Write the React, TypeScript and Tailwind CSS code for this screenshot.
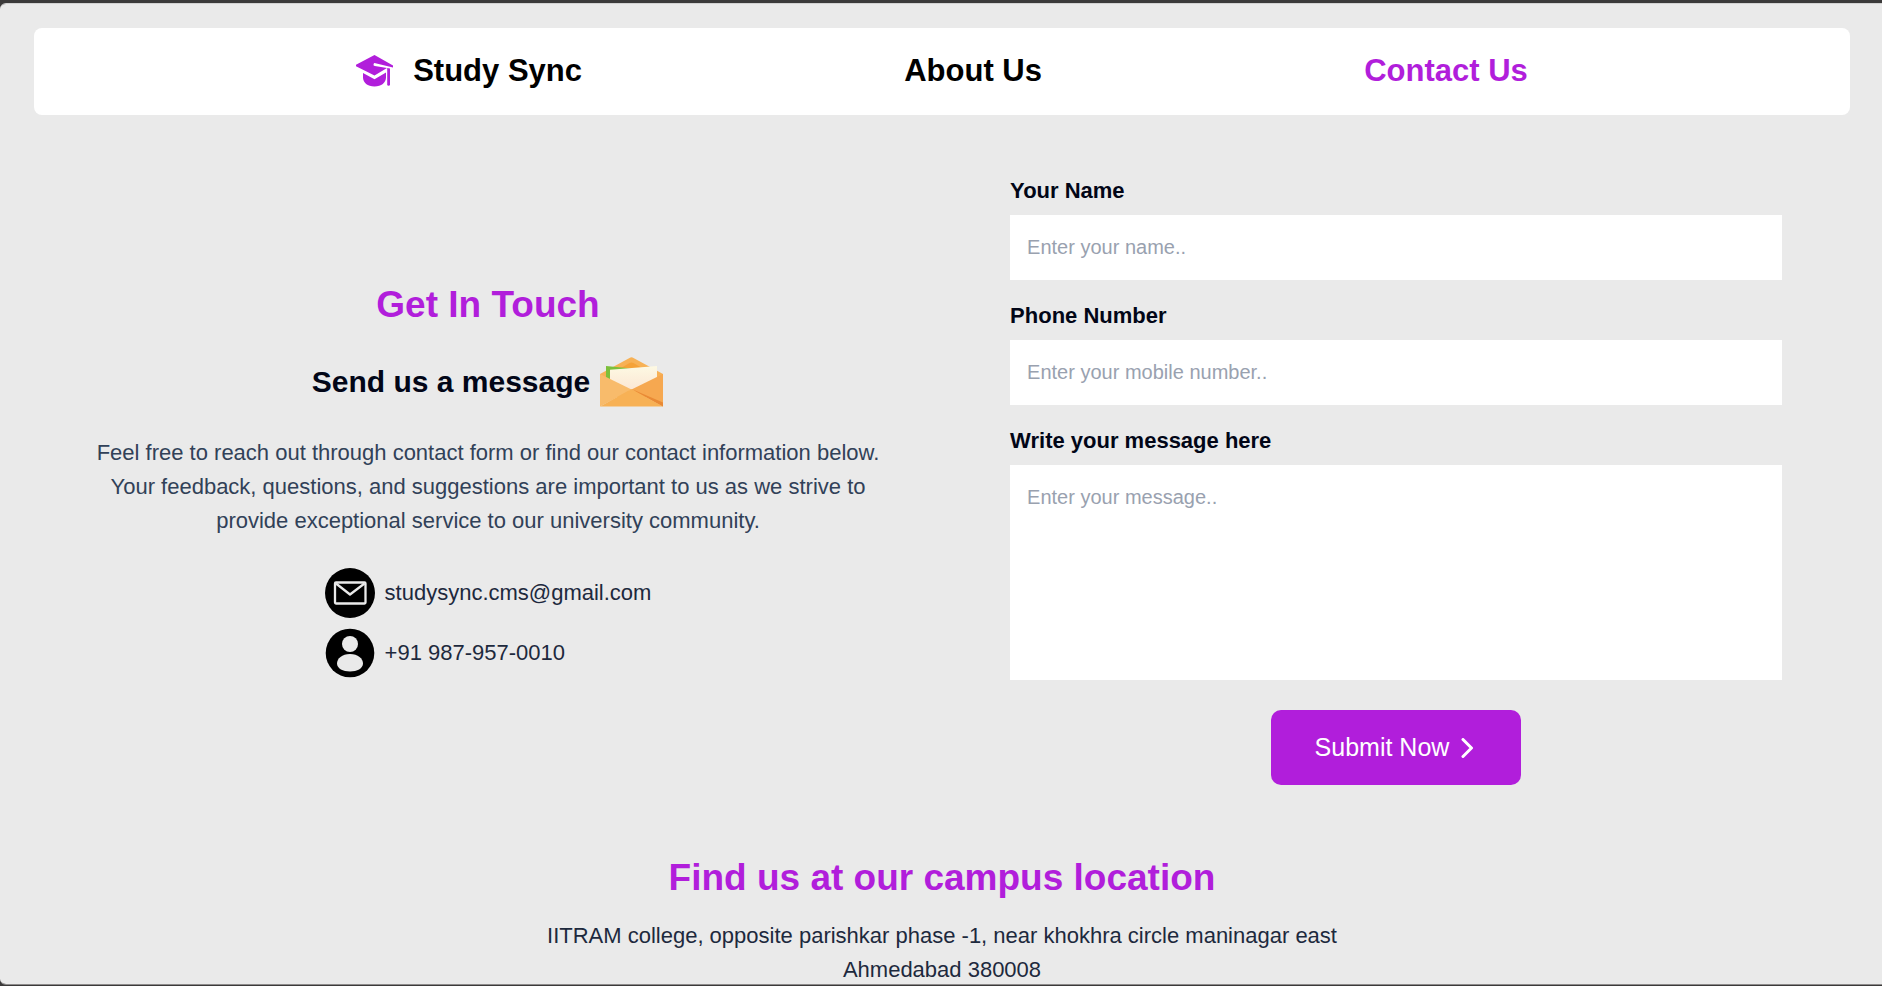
import React from "react";

const NAV_LINK = "text-[31px] leading-10 font-bold";
const LABEL = "block text-[22px] leading-[34px] font-bold text-[#020617]";
const FIELD =
  "block w-full bg-white px-[17px] text-[20px] leading-[30px] text-slate-900 placeholder:text-gray-400 outline-none";

function CapIcon() {
  return (
    <svg viewBox="0 0 38 32" className="h-8 w-[38px]" fill="#b11edb" aria-hidden="true">
      <path d="M18.500 0 37 10.600V12.400L19.500 8.200A1.500 1.500 0 1 0 18.800 11.100L31 13 18.500 20.400 0 11.200V9.800z" />
      <path d="M7 18 18.500 24.200 30 17.600V22.500c0 5-4.600 9-11.500 9S7 27.500 7 22.500z" />
      <path d="M31.200 13 34 13.400V29.400a1.400 1.400 0 0 1-2.800 0z" />
    </svg>
  );
}

function EnvelopeIcon() {
  return (
    <svg viewBox="0 0 64 50" className="h-[50px] w-16" aria-hidden="true">
      <defs>
        <linearGradient id="sheet" x1="0" y1="0" x2="0" y2="1">
          <stop offset="0" stopColor="#fdf9e3" />
          <stop offset="1" stopColor="#fbe4d2" />
        </linearGradient>
      </defs>
      <path d="M0 17 29.500 1Q31.500 -.4 33.500 1L63 17V40H0z" fill="#f7b155" />
      <path d="M16 14 29.500 6Q31.500 5 33.500 6L47 14z" fill="#f5a238" />
      <path d="M6 9 32 11.500 14 26 6 21z" fill="#7cbf3a" />
      <path d="M10 12.800 57 9V21L31.500 36 10 24z" fill="url(#sheet)" />
      <path d="M0 17 31.500 32.500 0 49.500z" fill="#f8bb6b" />
      <path d="M63 17 31.500 32.500 63 49.500z" fill="#f6a850" />
      <path d="M31.500 32 63 49.500H0z" fill="#f7b155" />
      <path d="M31.500 32 63 45.500V49.500z" fill="#e98a35" />
    </svg>
  );
}

function MailBadge() {
  return (
    <svg viewBox="0 0 50 50" className="size-[50px]" aria-hidden="true">
      <circle cx="25" cy="25" r="25" />
      <g fill="none" stroke="#eaeaea" strokeWidth="2.300" strokeLinejoin="round">
        <rect x="10" y="14.500" width="30.500" height="21" rx="1" />
        <path d="M11 15.500 25 26.500 39.500 15.500" />
      </g>
    </svg>
  );
}

function PersonBadge() {
  return (
    <svg viewBox="0 0 50 50" className="size-[50px]" aria-hidden="true">
      <circle cx="25" cy="25" r="24.300" />
      <g fill="#eaeaea">
        <circle cx="25" cy="16" r="8" />
        <path d="M25 26C33 26 38 30.500 38 35.500C38 40.500 32 43.500 25 43.500S12 40.500 12 35.500C12 30.500 17 26 25 26z" />
      </g>
    </svg>
  );
}

export default function App() {
  return (
    <div className="h-screen bg-[#3b3a3a] pt-[3px] pb-px font-['Liberation_Sans',Arial,sans-serif]">
      <div className="h-full overflow-y-auto rounded-l-md border-t border-b border-t-[#d2d2d2] border-b-[#8d8b8b] bg-[#eaeaea] pr-8 pl-[34px] [scrollbar-width:none]">
        <nav className="mt-6 flex h-[87px] items-center justify-evenly rounded-lg bg-white pb-[2px]">
          <a href="#home" className={`${NAV_LINK} flex items-center gap-[19px] text-black`}>
            <CapIcon />
            Study Sync
          </a>
          <a href="#about" className={`${NAV_LINK} text-black`}>
            About Us
          </a>
          <a href="#contact" className={`${NAV_LINK} text-[#b11edb]`}>
            Contact Us
          </a>
        </nav>

        <main>
          <div className="mt-[59px] grid grid-cols-2 items-center">
            <section className="flex flex-col items-center">
              <h1 className="text-[37px] leading-[45px] font-bold text-[#b11edb]">Get In Touch</h1>
              <div className="mt-[30px] flex items-center gap-[10px]">
                <h2 className="text-[30px] leading-[45px] font-bold text-[#020617]">Send us a message</h2>
                <EnvelopeIcon />
              </div>
              <p className="mt-[29px] w-[90%] text-center text-[22px] leading-[34px] text-slate-700">
                Feel free to reach out through contact form or find our contact information below. Your
                feedback, questions, and suggestions are important to us as we strive to provide
                exceptional service to our university community.
              </p>
              <ul className="mt-[30px] flex flex-col gap-[10px] text-[22px] leading-[34px] text-slate-800">
                <li className="flex items-center gap-[10px]">
                  <MailBadge />
                  studysync.cms@gmail.com
                </li>
                <li className="flex items-center gap-[10px]">
                  <PersonBadge />
                  +91 987-957-0010
                </li>
              </ul>
            </section>

            <form className="mx-auto w-[85%]" onSubmit={(e) => e.preventDefault()}>
              <label htmlFor="name" className={LABEL}>
                Your Name
              </label>
              <input id="name" type="text" placeholder="Enter your name.." className={`${FIELD} mt-[7px] h-[65px]`} />
              <label htmlFor="phone" className={`${LABEL} mt-[19px]`}>
                Phone Number
              </label>
              <input id="phone" type="tel" placeholder="Enter your mobile number.." className={`${FIELD} mt-[7px] h-[65px]`} />
              <label htmlFor="message" className={`${LABEL} mt-[19px]`}>
                Write your message here
              </label>
              <textarea
                id="message"
                placeholder="Enter your message.."
                className={`${FIELD} mt-[7px] h-[215px] resize-none py-[17px]`}
              />
              <button
                type="submit"
                className="mx-auto mt-[30px] flex h-[75px] w-[250px] items-center justify-center gap-2 rounded-[10px] bg-[#b11edb] text-[25px] text-white"
              >
                Submit Now
                <svg viewBox="0 0 20 20" className="size-5" fill="none" stroke="currentColor" strokeWidth="3" strokeLinecap="round" strokeLinejoin="round" aria-hidden="true">
                  <path d="M6 1.500 14.500 10 6 18.500" />
                </svg>
              </button>
            </form>
          </div>

          <section className="mt-[70px] flex flex-col items-center text-center">
            <h2 className="text-[37px] leading-[45px] font-bold text-[#b11edb]">Find us at our campus location</h2>
            <p className="mt-[19px] max-w-[820px] text-[22px] leading-[34px] text-slate-800">
              IITRAM college, opposite parishkar phase -1, near khokhra circle maninagar east Ahmedabad
              380008
            </p>
          </section>
        </main>
      </div>
    </div>
  );
}
